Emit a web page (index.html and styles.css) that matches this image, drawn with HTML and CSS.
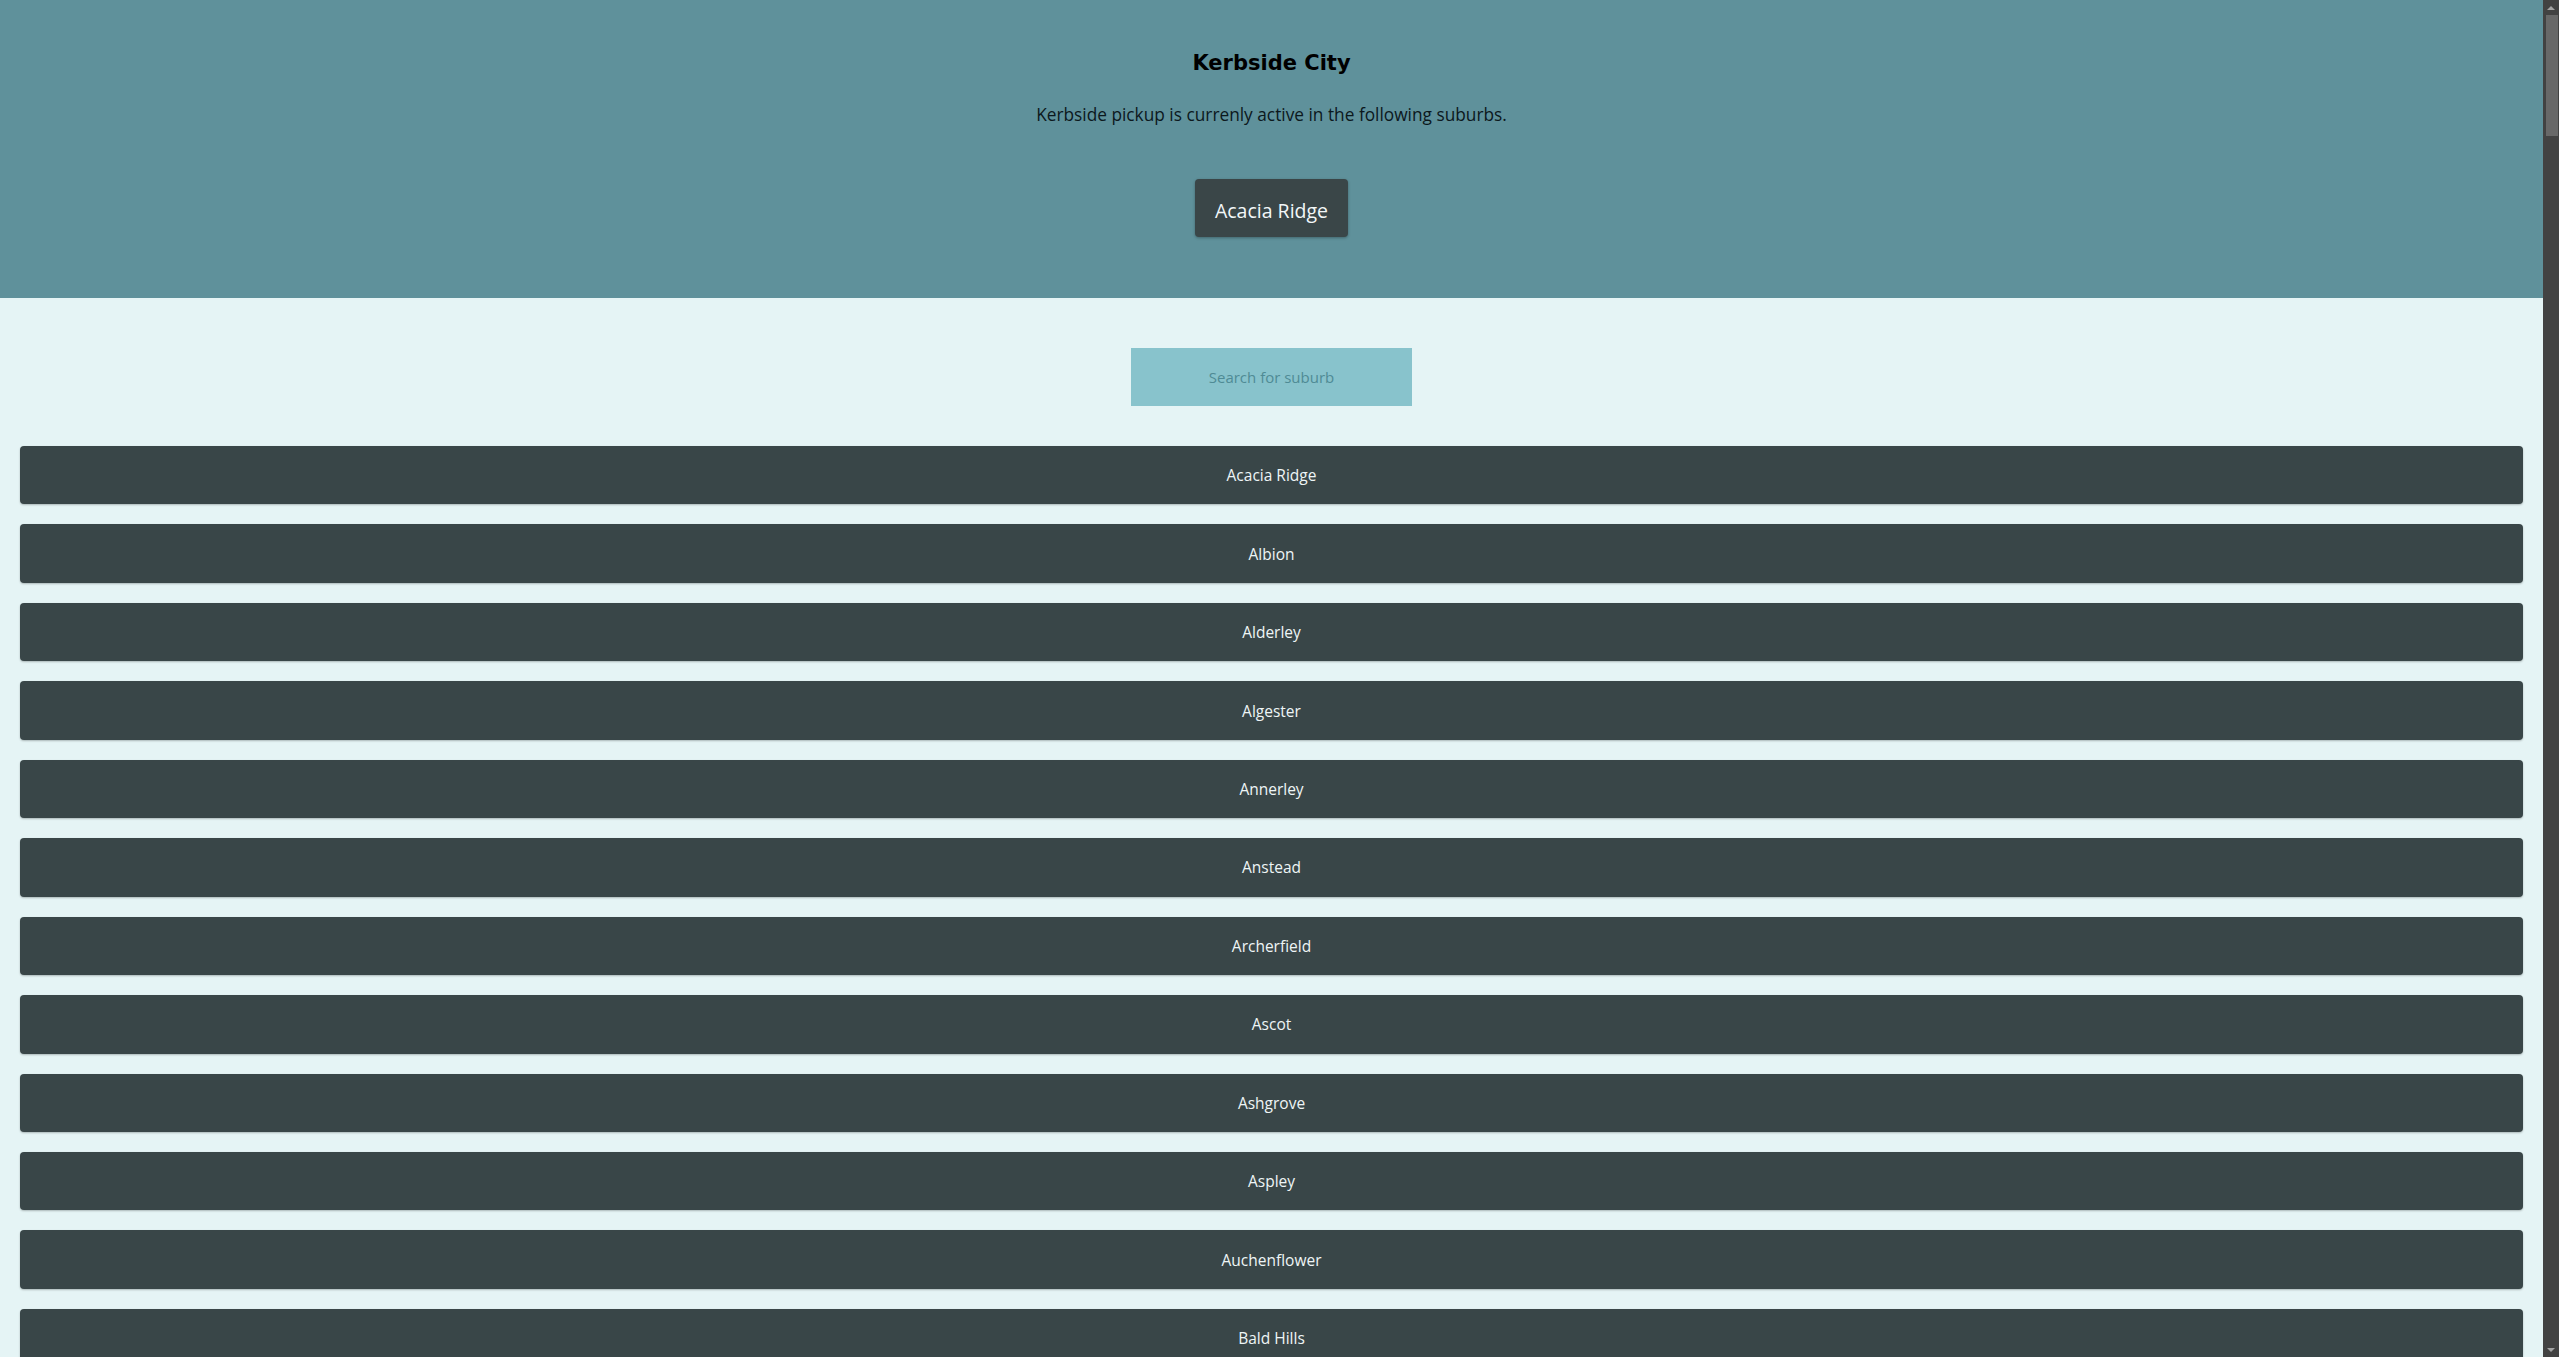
FILE: index.html
```html
<!DOCTYPE html>
<html lang="en">
<head>
<meta charset="utf-8">
<title>Kerbside City</title>
<link rel="stylesheet" href="styles.css">
</head>
<body>
<div class="page">
  <header class="hero">
    <h1 class="hero-title">Kerbside City</h1>
    <p class="hero-sub">Kerbside pickup is currenly active in the following suburbs.</p>
    <button class="hero-btn">Acacia Ridge</button>
  </header>
  <main class="content">
    <div class="search-wrap">
      <input class="search" type="text" placeholder="Search for suburb">
    </div>
    <ul class="suburbs">
      <li class="suburb">Acacia Ridge</li>
      <li class="suburb">Albion</li>
      <li class="suburb">Alderley</li>
      <li class="suburb">Algester</li>
      <li class="suburb">Annerley</li>
      <li class="suburb">Anstead</li>
      <li class="suburb">Archerfield</li>
      <li class="suburb">Ascot</li>
      <li class="suburb">Ashgrove</li>
      <li class="suburb">Aspley</li>
      <li class="suburb">Auchenflower</li>
      <li class="suburb">Bald Hills</li>
      <li class="suburb">Balmoral</li>
      <li class="suburb">Banyo</li>
    </ul>
  </main>
</div>
<div class="scrollbar" aria-hidden="true">
  <div class="sb-arrow sb-up"></div>
  <div class="sb-thumb"></div>
  <div class="sb-track"></div>
  <div class="sb-arrow sb-down"></div>
</div>
</body>
</html>
```
FILE: styles.css
```css
html {
  background: #e5f4f5;
}
body {
  margin: 0;
  height: 100vh;
  overflow: hidden;
  display: flex;
  font-family: "Open Sans", "Noto Sans", sans-serif;
  background: #e5f4f5;
  color: #0f1b1f;
}
.page {
  flex: 1;
  min-width: 0;
  overflow: hidden;
}
.scrollbar {
  width: 16px;
  flex: none;
  background: #424242;
  display: flex;
  flex-direction: column;
  align-items: center;
}
.sb-arrow {
  height: 15px;
  width: 16px;
  display: flex;
  align-items: center;
  justify-content: center;
}
.sb-up::before {
  content: "";
  border-left: 4px solid transparent;
  border-right: 4px solid transparent;
  border-bottom: 4px solid #a3a3a3;
}
.sb-down::before {
  content: "";
  border-left: 4px solid transparent;
  border-right: 4px solid transparent;
  border-top: 4px solid #a3a3a3;
}
.sb-thumb {
  width: 12px;
  margin-left: 2px;
  height: 121px;
  background: #686868;
}
.sb-track {
  flex: 1;
}
.hero {
  background: #5f919b;
  height: 298px;
  box-sizing: border-box;
  padding-top: 46px;
  display: flex;
  flex-direction: column;
  align-items: center;
}
.hero-title {
  margin: 0;
  font-family: "DejaVu Sans", sans-serif;
  font-size: 21px;
  font-weight: bold;
  line-height: 34px;
  color: #000;
}
.hero-sub {
  margin: 23px 0 0;
  font-size: 17.3px;
  line-height: 24px;
  color: #0c181d;
}
.hero-btn {
  margin-top: 52px;
  height: 58px;
  padding: 4px 20px 0;
  border: none;
  border-radius: 4px;
  background: #3a4648;
  color: #f2f7f8;
  font-family: "Open Sans", "Noto Sans", sans-serif;
  font-size: 19.5px;
  box-shadow: 0 1px 3px rgba(0, 0, 0, 0.3);
}
.content {
  padding: 50px 20px 0;
}
.search-wrap {
  display: flex;
  justify-content: center;
}
.search {
  width: 281px;
  height: 58px;
  box-sizing: border-box;
  border: none;
  background: #88c3cc;
  text-align: center;
  font-family: "Open Sans", "Noto Sans", sans-serif;
  font-size: 15px;
  outline: none;
}
.search::placeholder {
  color: #4f8b95;
}
.suburbs {
  list-style: none;
  margin: 40px 0 0;
  padding: 0;
  display: flex;
  flex-direction: column;
  gap: 20px;
}
.suburb {
  height: 58.45px;
  flex: none;
  display: flex;
  align-items: center;
  justify-content: center;
  background: #394648;
  color: #eef5f6;
  border-radius: 4px;
  font-size: 15.5px;
  box-shadow: 0 1px 2px rgba(0, 0, 0, 0.25);
}
```
